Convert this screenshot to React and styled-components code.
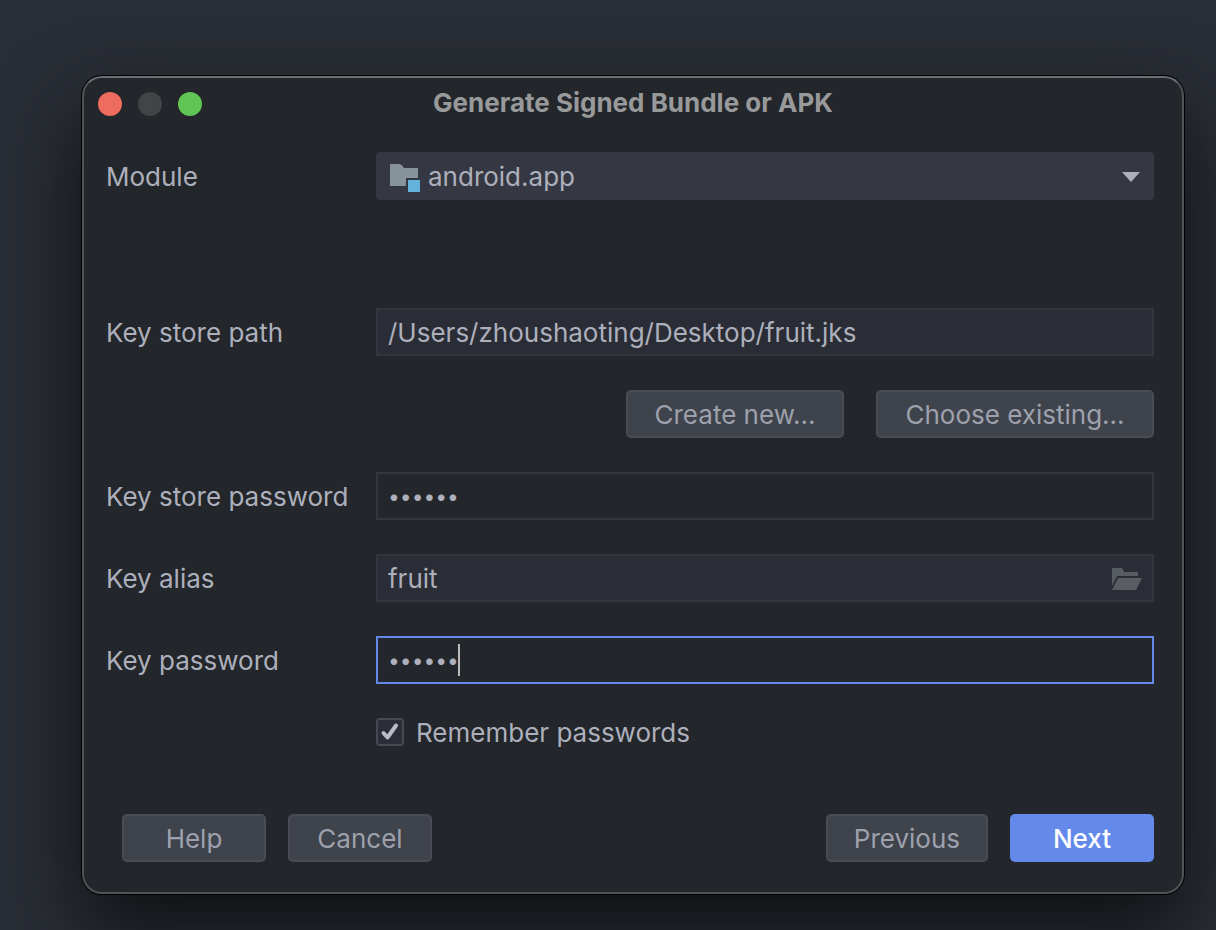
import React, { useState } from "react";
import styled, { createGlobalStyle } from "styled-components";

const GlobalStyle = createGlobalStyle`
  * { box-sizing: border-box; }
  html { min-height: 100%; background: #292d35; }
  body {
    margin: 0;
    font-family: Inter, "Liberation Sans", sans-serif;
    font-size: 26px;
    line-height: 32px;
    color: #adb0bc;
  }
  button, input, select { font: inherit; color: inherit; }
`;

const Desktop = styled.main`
  min-height: 100vh;
  padding: 76px 32px 36px 82px;
  overflow: hidden;
`;

const Window = styled.section`
  border: 2px solid #515357;
  border-top-color: #6d6e71;
  border-radius: 20px;
  background: #23262a;
  box-shadow: 0 0 0 1px #000, 0 36px 80px 0 rgba(0, 0, 0, 0.65);
`;

const TitleBar = styled.header`
  display: grid;
  grid-template-columns: 1fr auto 1fr;
  align-items: center;
  height: 52px;
  padding: 0 14px;
`;

const Lights = styled.div`
  display: flex;
  gap: 16px;
`;

const Light = styled.button`
  width: 24px;
  height: 24px;
  padding: 0;
  border: 0;
  border-radius: 50%;
  background: ${(p) => p.$color};
`;

const Title = styled.h1`
  margin: 0;
  padding-bottom: 2px;
  font-size: 26px;
  line-height: 32px;
  font-weight: 700;
  color: #98999b;
`;

const Form = styled.form`
  padding: 22px 28px 30px 22px;
`;

const Fields = styled.div`
  display: grid;
  grid-template-columns: 270px 1fr;
  row-gap: 34px;
  align-items: center;
`;

const Label = styled.label`
  align-self: start;
  padding: 9px 0 7px;
`;

const Holder = styled.div`
  position: relative;
  height: ${(p) => (p.$tall ? "122px" : "48px")};
`;

const Select = styled.select`
  appearance: none;
  display: block;
  width: 100%;
  height: 48px;
  padding: 2px 48px 0 52px;
  border: 0;
  border-radius: 4px;
  background: #353842;
  outline: none;
`;

const Input = styled.input`
  display: block;
  width: 100%;
  height: 48px;
  padding: 0 10px;
  border: 2px solid ${(p) => (p.$active ? "#638aeb" : "#33373d")};
  border-radius: 0;
  background: ${(p) => (p.type === "password" ? "#23262a" : "#2a2d35")};
  font-size: ${(p) => (p.type === "password" ? "21px" : "26px")};
  outline: none;
`;

const Overlay = styled.svg`
  position: absolute;
  top: 0;
  ${(p) => p.$side}: 12px;
  height: 48px;
  pointer-events: none;
`;

const Caret = styled.span`
  position: absolute;
  left: 82px;
  top: 8px;
  width: 2px;
  height: 32px;
  background: #bbbbbb;
`;

const Actions = styled.div`
  grid-column: 1 / -1;
  display: flex;
  justify-content: flex-end;
  gap: 32px;
`;

const Button = styled.button`
  min-width: ${(p) => p.$width || "144px"};
  height: 48px;
  padding: 2px 26px 0;
  border: 2px solid ${(p) => (p.$primary ? "#638aeb" : "#494c55")};
  border-radius: 5px;
  background: ${(p) => (p.$primary ? "#638aeb" : "#3f434b")};
  color: ${(p) => (p.$primary ? "#ffffff" : "#9da1ad")};
  font-weight: ${(p) => (p.$primary ? 500 : 400)};
`;

const Remember = styled.label`
  grid-column: 2;
  display: flex;
  align-items: center;
  gap: 12px;
  height: 28px;
`;

const RememberText = styled.span`
  padding-top: 2px;
`;

const CheckHolder = styled.span`
  position: relative;
  width: 28px;
  height: 28px;
`;

const Check = styled.input`
  appearance: none;
  display: block;
  width: 28px;
  height: 28px;
  margin: 0;
  border: 2px solid #464952;
  border-radius: 4px;
  background: #2a2d35;
  & + svg { display: none; }
  &:checked + svg { display: block; }
`;

const CheckMark = styled.svg`
  position: absolute;
  inset: 0;
  pointer-events: none;
`;

const Footer = styled.footer`
  display: flex;
  gap: 22px;
  margin-top: 68px;
  padding-left: 16px;
`;

const Spacer = styled.span`
  flex: 1;
`;

export default function App() {
  const [path, setPath] = useState("/Users/zhoushaoting/Desktop/fruit.jks");
  const [storePassword, setStorePassword] = useState("123456");
  const [alias, setAlias] = useState("fruit");
  const [keyPassword, setKeyPassword] = useState("123456");

  return (
    <Desktop>
      <GlobalStyle />
      <Window aria-labelledby="title">
        <TitleBar>
          <Lights>
            <Light $color="#ed6b5f" aria-label="Close" />
            <Light $color="#424448" aria-label="Minimize" />
            <Light $color="#61c555" aria-label="Zoom" />
          </Lights>
          <Title id="title">Generate Signed Bundle or APK</Title>
        </TitleBar>
        <Form onSubmit={(e) => e.preventDefault()}>
          <Fields>
            <Label htmlFor="module">Module</Label>
            <Holder $tall>
              <Select id="module" defaultValue="android.app">
                <option>android.app</option>
              </Select>
              <Overlay $side="left" width="34" viewBox="0 0 34 48" aria-hidden="true">
                <path d="M2 12H11Q13 12 14.500 14L16 16H30V26H18V34H2Z" fill="#87939a" />
                <path d="M20 28H32V40H20Z" fill="#62b2dc" />
              </Overlay>
              <Overlay $side="right" width="22" viewBox="0 0 22 48" aria-hidden="true">
                <path d="M2 20H20L11 30Z" fill="#adb0bc" />
              </Overlay>
            </Holder>

            <Label htmlFor="path">Key store path</Label>
            <Input id="path" type="text" value={path} onChange={(e) => setPath(e.target.value)} />

            <Actions>
              <Button type="button" $width="218px">Create new...</Button>
              <Button type="button" $width="278px">Choose existing...</Button>
            </Actions>

            <Label htmlFor="store-password">Key store password</Label>
            <Input
              id="store-password"
              type="password"
              value={storePassword}
              onChange={(e) => setStorePassword(e.target.value)}
            />

            <Label htmlFor="alias">Key alias</Label>
            <Holder>
              <Input id="alias" type="text" value={alias} onChange={(e) => setAlias(e.target.value)} />
              <Overlay $side="right" width="30" viewBox="0 0 30 48" aria-hidden="true">
                <path d="M0 14H10L12 18H26V22H5L0 32Z" fill="#585d64" />
                <path d="M6 24H30L24 36H0Z" fill="#585d64" />
              </Overlay>
            </Holder>

            <Label htmlFor="key-password">Key password</Label>
            <Holder>
              <Input
                id="key-password"
                type="password"
                $active
                value={keyPassword}
                onChange={(e) => setKeyPassword(e.target.value)}
              />
              <Caret />
            </Holder>

            <Remember>
              <CheckHolder>
                <Check type="checkbox" defaultChecked />
                <CheckMark width="28" height="28" viewBox="0 0 28 28" aria-hidden="true">
                  <path d="M7.500 15L11.500 19.500L20 7.500" fill="none" stroke="#b9bcc8" strokeWidth="4" strokeLinecap="round" strokeLinejoin="round" />
                </CheckMark>
              </CheckHolder>
              <RememberText>Remember passwords</RememberText>
            </Remember>
          </Fields>
          <Footer>
            <Button type="button">Help</Button>
            <Button type="button">Cancel</Button>
            <Spacer />
            <Button type="button">Previous</Button>
            <Button type="submit" $primary>Next</Button>
          </Footer>
        </Form>
      </Window>
    </Desktop>
  );
}
